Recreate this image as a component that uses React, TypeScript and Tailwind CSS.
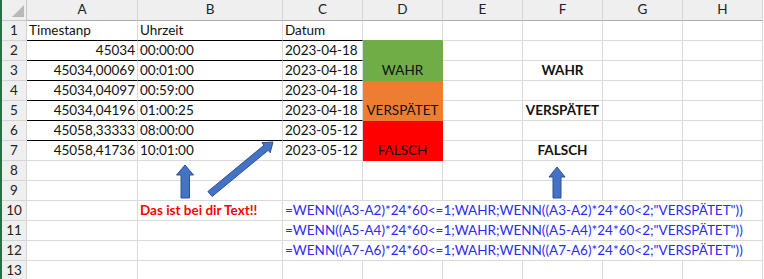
import React from 'react';

type CellDef = {
  text?: string;
  cls?: string;
  span?: string;
};

const COLS = ['A', 'B', 'C', 'D', 'E', 'F', 'G', 'H'];

const grid = 'border-[#dadada]';
const ruled = 'border-[#dadada] border-b-black';

const green = 'bg-[#70ad47] border-[#70ad47] justify-center';
const orange = 'bg-[#ed7d31] border-[#ed7d31] justify-center';
const red = 'bg-[#ff0000] border-[#ff0000] justify-center';

// one entry per row, columns A..H
const rows: CellDef[][] = [
  [
    { text: 'Timestanp', cls: ruled },
    { text: 'Uhrzeit', cls: ruled },
    { text: 'Datum', cls: ruled },
    { cls: 'border-[#dadada] border-b-[#70ad47]' },
    {}, {}, {}, {},
  ],
  [
    { text: '45034', cls: `${ruled} justify-end` },
    { text: '00:00:00', cls: ruled },
    { text: '2023-04-18', cls: ruled },
    { cls: green },
    {}, {}, {}, {},
  ],
  [
    { text: '45034,00069', cls: `${ruled} justify-end` },
    { text: '00:01:00', cls: ruled },
    { text: '2023-04-18', cls: ruled },
    { text: 'WAHR', cls: green },
    {},
    { text: 'WAHR', cls: `${grid} justify-center font-bold` },
    {}, {},
  ],
  [
    { text: '45034,04097', cls: `${ruled} justify-end` },
    { text: '00:59:00', cls: ruled },
    { text: '2023-04-18', cls: ruled },
    { cls: orange },
    {}, {}, {}, {},
  ],
  [
    { text: '45034,04196', cls: `${ruled} justify-end` },
    { text: '01:00:25', cls: ruled },
    { text: '2023-04-18', cls: ruled },
    { text: 'VERSPÄTET', cls: orange },
    {},
    { text: 'VERSPÄTET', cls: `${grid} justify-center font-bold` },
    {}, {},
  ],
  [
    { text: '45058,33333', cls: `${ruled} justify-end` },
    { text: '08:00:00', cls: ruled },
    { text: '2023-05-12', cls: ruled },
    { cls: red },
    {}, {}, {}, {},
  ],
  [
    { text: '45058,41736', cls: `${grid} justify-end` },
    { text: '10:01:00' },
    { text: '2023-05-12' },
    { text: 'FALSCH', cls: red },
    {},
    { text: 'FALSCH', cls: `${grid} justify-center font-bold` },
    {}, {},
  ],
  [{}, {}, {}, {}, {}, {}, {}, {}],
  [{}, {}, {}, {}, {}, {}, {}, {}],
  [
    {},
    { text: 'Das ist bei dir Text!!', cls: `${grid} font-bold text-[#ff0000]` },
    {
      text: '=WENN((A3-A2)*24*60<=1;WAHR;WENN((A3-A2)*24*60<2;"VERSPÄTET"))',
      cls: `${grid} text-[#2b2bff]`,
      span: 'col-span-6',
    },
  ],
  [
    {}, {},
    {
      text: '=WENN((A5-A4)*24*60<=1;WAHR;WENN((A5-A4)*24*60<2;"VERSPÄTET"))',
      cls: `${grid} text-[#2b2bff]`,
      span: 'col-span-6',
    },
  ],
  [
    {}, {},
    {
      text: '=WENN((A7-A6)*24*60<=1;WAHR;WENN((A7-A6)*24*60<2;"VERSPÄTET"))',
      cls: `${grid} text-[#2b2bff]`,
      span: 'col-span-6',
    },
  ],
  [{}, {}, {}, {}, {}, {}, {}, {}],
];

function Arrows() {
  return (
    <svg
      className="absolute left-0 top-0 pointer-events-none"
      width={764}
      height={279}
      viewBox="0 0 764 279"
    >
      <g fill="#4472c4" stroke="#2f528f" strokeWidth={1} strokeLinejoin="miter">
        <polygon points="185,165 193.5,175 189.5,175 189.5,198 181,198 181,175 176.5,175" />
        <polygon points="273,142 270.2,152.7 268.2,150.3 212.1,196.5 207.9,191.5 264,145.2 261.9,142.7" />
        <polygon points="557,167 565,177 561,177 561,198 553,198 553,177 549,177" />
      </g>
    </svg>
  );
}

export default function App() {
  return (
    <div
      className="relative flex w-[764px] h-[279px] overflow-hidden bg-white text-[13.5px] text-[#111]"
      style={{ fontFamily: 'Lato, "Open Sans", sans-serif' }}
    >
      <div className="w-[2px] shrink-0 bg-[#217346]" />
      <div className="grid grid-cols-[25px_111px_145px_80px_80px_80px_80px_80px_80px] content-start">
        {/* corner */}
        <div className="relative h-[21px] bg-[#efefef] border-r border-b border-[#c6c6c6]">
          <svg className="absolute left-[10px] top-[5px]" width={13} height={13} viewBox="0 0 13 13">
            <polygon points="12,0 12,12 0,12" fill="#b8b8b8" />
          </svg>
        </div>
        {COLS.map((c) => (
          <div
            key={c}
            className="h-[21px] bg-[#efefef] border-r border-b border-[#d4d4d4] border-b-[#acacac] flex items-end justify-center pb-[3px] leading-[16px] text-[#222]"
          >
            {c}
          </div>
        ))}

        {rows.map((row, r) => (
          <React.Fragment key={r}>
            <div className="h-[20px] bg-[#efefef] border-r border-b border-[#d4d4d4] flex items-end justify-center pb-[2px] leading-[16px] text-[#222]">
              {r + 1}
            </div>
            {row.map((cell, i) => (
              <div
                key={i}
                className={`h-[20px] border-r border-b flex items-end px-[2px] pb-[2px] leading-[16px] whitespace-nowrap ${cell.cls ?? grid} ${cell.span ?? ''}`}
              >
                {cell.text}
              </div>
            ))}
          </React.Fragment>
        ))}
      </div>
      <Arrows />
    </div>
  );
}
